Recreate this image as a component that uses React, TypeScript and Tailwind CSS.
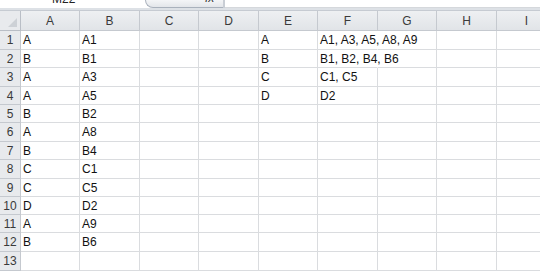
import React from "react";

const colWidths = [59, 60, 59, 60, 59, 60, 59, 60, 60];
const colNames = ["A", "B", "C", "D", "E", "F", "G", "H", "I"];
const rowHeights = [19, 18, 19, 18, 18, 19, 18, 19, 18, 18, 18, 19, 19];

const colA = ["A", "B", "A", "A", "B", "A", "B", "C", "C", "D", "A", "B"];
const colB = ["A1", "B1", "A3", "A5", "B2", "A8", "B4", "C1", "C5", "D2", "A9", "B6"];
const colE = ["A", "B", "C", "D"];
const colF = ["A1, A3, A5, A8, A9", "B1, B2, B4, B6", "C1, C5", "D2"];

function cellValue(row: number, col: number): string {
  if (col === 0) return colA[row] ?? "";
  if (col === 1) return colB[row] ?? "";
  if (col === 4) return colE[row] ?? "";
  if (col === 5) return colF[row] ?? "";
  return "";
}

export default function App() {
  return (
    <div
      className="w-[540px] h-[273px] overflow-hidden bg-white text-[#111]"
      style={{ fontFamily: '"Liberation Sans", Arial, sans-serif' }}
    >
      {/* formula bar strip, mostly scrolled off */}
      <div className="flex h-[8px] bg-white">
        <div className="w-[145px] h-full overflow-hidden relative">
          <span className="absolute left-[52px] top-[-7px] text-[12px] leading-[12px] text-[#222]">
            M22
          </span>
        </div>
        <div className="w-[78px] h-full relative overflow-hidden rounded-bl-[8px] border-b border-l border-[#a9b1bc] bg-gradient-to-b from-[#f4f5f7] to-[#e3e6ea]">
          <span className="absolute left-[59px] top-[-8px] text-[12px] leading-[12px] italic text-[#333]">
            fx
          </span>
        </div>
        <div className="w-[2px] h-full border-l border-r border-[#c9ced5] bg-[#eef0f2]" />
        <div className="flex-1 h-full bg-white border-b border-[#d5d8dc]" />
      </div>
      <div className="h-[3px] bg-[#dde1e6] border-b border-[#c6cbd2]" />

      {/* column header row */}
      <div className="flex h-[20px]">
        <div className="w-[21px] shrink-0 relative border-r border-b border-[#b9bec6] bg-[#e8eaed]">
          <div className="absolute right-[3px] bottom-[3px] w-0 h-0 border-l-[9px] border-l-transparent border-b-[9px] border-b-[#cdd1d6]" />
        </div>
        {colNames.map((name, i) => (
          <div
            key={name}
            style={{ width: colWidths[i] }}
            className="shrink-0 flex items-center justify-center border-r border-b border-[#c5c9cf] bg-gradient-to-b from-[#eef0f2] to-[#e1e4e8] text-[12px] text-[#3a3a3a]"
          >
            {name}
          </div>
        ))}
      </div>

      {/* rows */}
      {rowHeights.map((h, r) => (
        <div key={r} className="flex" style={{ height: h }}>
          <div className="w-[21px] shrink-0 flex items-center justify-center border-r border-b border-[#c5c9cf] bg-[#e8eaed] text-[12px] text-[#3a3a3a]">
            {r + 1}
          </div>
          {colNames.map((name, c) => {
            const text = cellValue(r, c);
            const spills = c === 5 && (r === 0 || r === 1);
            return (
              <div
                key={name}
                style={{ width: colWidths[c] }}
                className={`shrink-0 flex items-center pl-[2px] border-b border-[#dadcdf] text-[12px] whitespace-nowrap overflow-visible ${
                  spills ? "border-r border-r-transparent" : "border-r"
                } ${spills ? "" : "border-r-[#dadcdf]"}`}
              >
                {text}
              </div>
            );
          })}
        </div>
      ))}
    </div>
  );
}
